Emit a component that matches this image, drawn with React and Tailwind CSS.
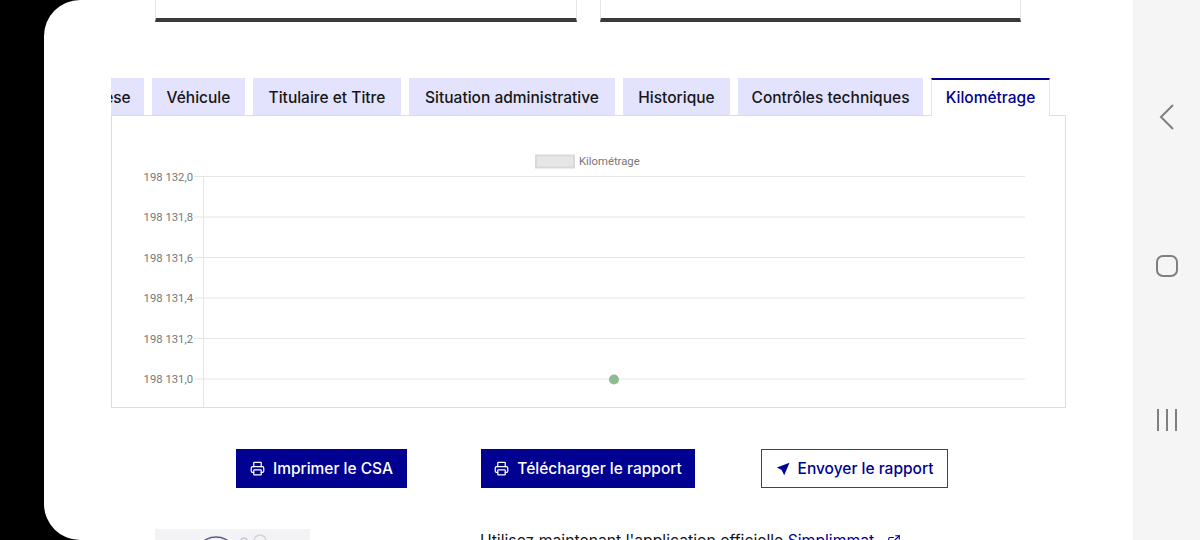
import React from 'react';
import { ExternalLink, Printer } from 'lucide-react';

const tabs = [
  { label: 'Synthèse', width: 'w-[96px]' },
  { label: 'Véhicule', width: 'w-[93px]' },
  { label: 'Titulaire et Titre', width: 'w-[148px]' },
  { label: 'Situation administrative', width: 'w-[206px]' },
  { label: 'Historique', width: 'w-[107px]' },
  { label: 'Contrôles techniques', width: 'w-[185px]' },
];

const ticks = ['198 132,0', '198 131,8', '198 131,6', '198 131,4', '198 131,2', '198 131,0'];

// graphique Chart.js figé
const MileageChart = () => (
  <svg width="953" height="291" viewBox="0 0 953 291" className="block" style={{ fontFamily: 'Roboto, sans-serif' }}>
    <rect x="424" y="39.5" width="38" height="12" fill="#e6e6e6" stroke="#d9d9d9" strokeWidth="2" />
    <text x="467" y="49" fontSize="11.3" fill="#777777">Kilométrage</text>
    {ticks.map((t, i) => {
      const y = 60.5 + i * 40.5;
      return (
        <g key={t}>
          <line x1="82" x2="913" y1={y} y2={y} stroke="#e5e5e5" />
          <text x="81" y={y + 4} fontSize="11.3" fill="#777777" textAnchor="end">{t}</text>
        </g>
      );
    })}
    <line x1="91.5" x2="91.5" y1="60" y2="291" stroke="#e5e5e5" />
    <circle cx="502" cy="263.5" r="5" fill="#8fbc8f" />
  </svg>
);

const SendIcon = () => (
  <svg width="14" height="14" viewBox="0 0 14 14" fill="#000091">
    <path d="M13.5 0.8 L0.8 5.6 L5.7 8.1 L8.2 13.2 Z" />
  </svg>
);

export default function App() {
  return (
    <div className="flex h-[540px] w-[1200px] overflow-hidden bg-black font-['Inter',sans-serif]">
      <div className="w-[44px] shrink-0" />

      <main className="flex-1 overflow-hidden rounded-l-[36px] bg-white">
        {/* cartes du haut */}
        <div className="ml-[111px] flex gap-[23px]">
          <div className="h-[22px] w-[422px] border-x border-b-[4px] border-x-[#e5e5e5] border-b-[#3a3a3a]" />
          <div className="h-[22px] w-[421px] border-x border-b-[4px] border-x-[#e5e5e5] border-b-[#3a3a3a]" />
        </div>

        <div className="ml-[67px] mt-[56px] w-[954px]">
          {/* onglets */}
          <div className="flex h-[38px] w-[939px] justify-end gap-2 overflow-hidden">
            {tabs.map((tab) => (
              <div
                key={tab.label}
                className={`flex h-[37px] shrink-0 items-center justify-center bg-[#e3e3fd] pt-0.5 text-[15.5px] font-medium text-[#161616] ${tab.width}`}
              >
                {tab.label}
              </div>
            ))}
            <div className="relative z-10 flex h-[38px] w-[119px] shrink-0 items-center justify-center border-x border-t-2 border-x-[#e5e5e5] border-t-[#000091] bg-white text-[15.5px] font-medium text-[#000091]">
              Kilométrage
            </div>
          </div>

          <div className="-mt-px h-[293px] w-[955px] border border-[#dddddd]">
            <MileageChart />
          </div>
        </div>

        {/* boutons */}
        <div className="ml-[192px] mt-[41px] flex">
          <button className="mr-[74px] flex h-[39px] w-[171px] items-center justify-center gap-2 bg-[#000091] text-[15.5px] font-medium text-white">
            <Printer size={15} />
            Imprimer le CSA
          </button>
          <button className="mr-[66px] flex h-[39px] w-[214px] items-center justify-center gap-2 bg-[#000091] text-[15.5px] font-medium text-white">
            <Printer size={15} />
            Télécharger le rapport
          </button>
          <button className="flex h-[39px] w-[187px] items-center justify-center gap-2 border border-[#3c3c78] bg-white text-[15.5px] font-medium text-[#000091]">
            <SendIcon />
            Envoyer le rapport
          </button>
        </div>

        {/* bas de page */}
        <div className="ml-[111px] mt-[41px] flex items-start">
          <div className="h-[40px] w-[155px] bg-[#f3f3f5]">
            <svg width="155" height="11" viewBox="0 0 155 11" fill="none" className="block">
              <ellipse cx="61" cy="15" rx="13" ry="7" stroke="#5a5f85" strokeWidth="1.5" />
              <circle cx="89" cy="12" r="3" stroke="#c5c8d8" strokeWidth="1.5" />
              <circle cx="105" cy="12" r="6" stroke="#d0d2de" strokeWidth="1.5" />
            </svg>
          </div>
          <p className="ml-[170px] flex items-center gap-[13px] text-[15.75px] leading-6 text-[#161616]">
            <span>
              Utilisez maintenant l'application officielle <span className="text-[#000091]">Simplimmat</span>
            </span>
            <ExternalLink size={14} className="text-[#000091]" />
          </p>
        </div>
      </main>

      {/* barre de navigation Android */}
      <nav className="flex w-[67px] shrink-0 flex-col items-center bg-[#f5f5f5] pt-[104px] text-[#7f7f7f]">
        <svg width="16" height="26" viewBox="0 0 16 26" fill="none" stroke="currentColor" strokeWidth="2">
          <path d="M14 1 L2 13 L14 25" />
        </svg>
        <div className="mt-[125px] h-[22px] w-[22px] rounded-[7px] border-2 border-[#7f7f7f]" />
        <svg width="22" height="24" viewBox="0 0 22 24" stroke="currentColor" strokeWidth="2" className="mt-[131px]">
          <path d="M2 1 V23 M11 1 V23 M20 1 V23" />
        </svg>
      </nav>
    </div>
  );
}
